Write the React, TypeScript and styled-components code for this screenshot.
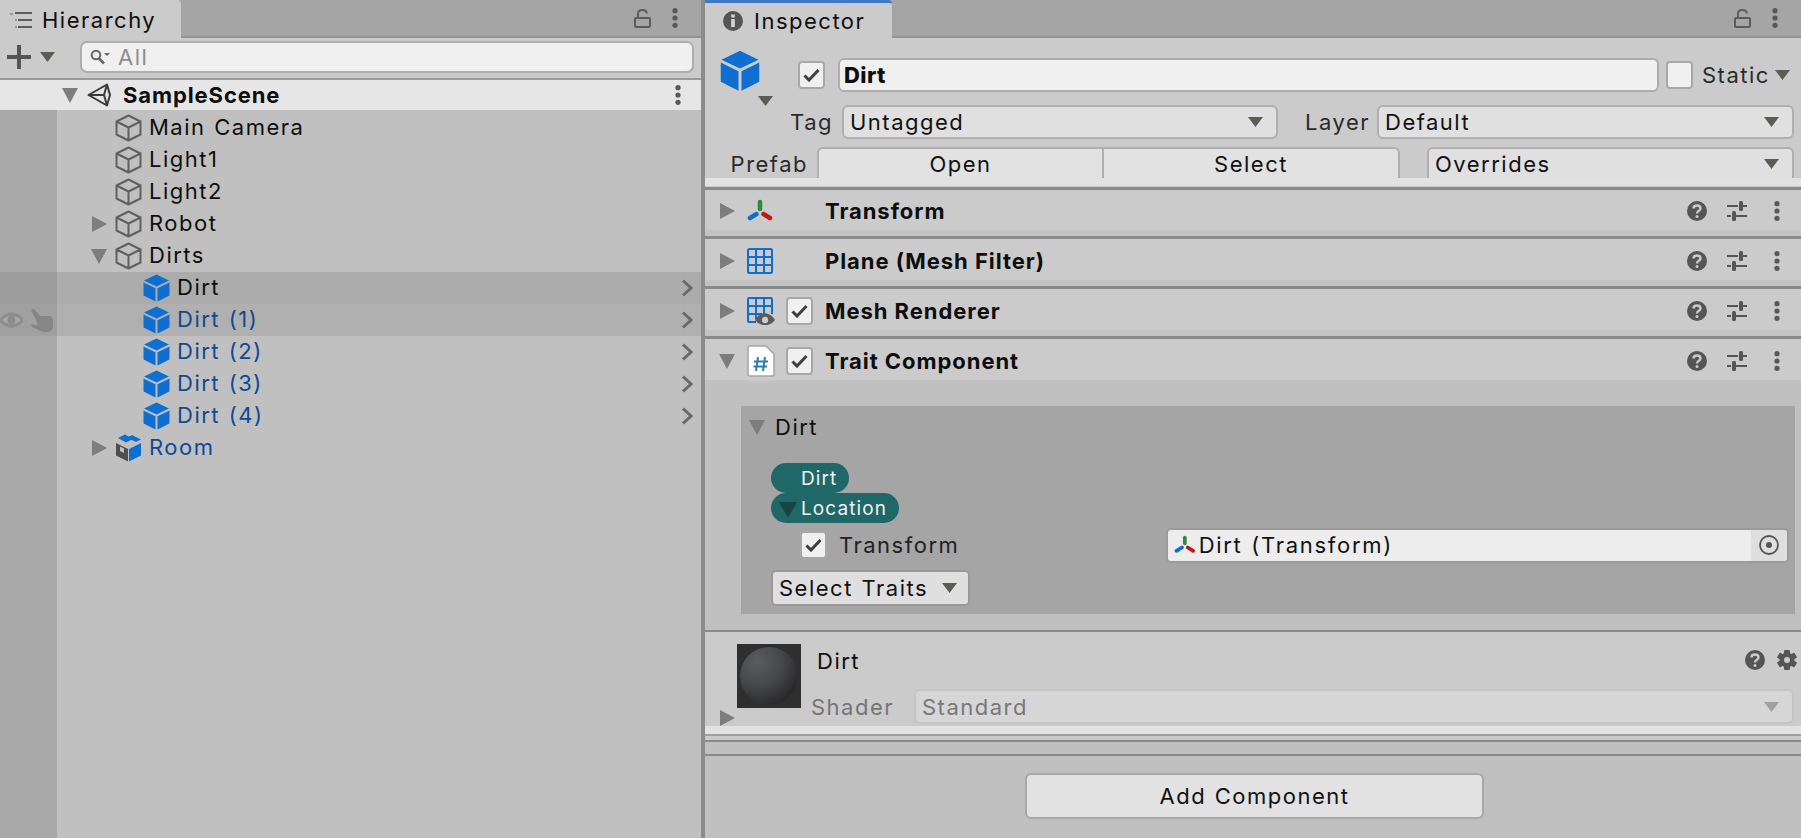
import React from "react";
import styled, { createGlobalStyle } from "styled-components";

const Global = createGlobalStyle`
  html, body { margin: 0; padding: 0; height: 100%; overflow: hidden; background: #c0c0c0; }
  #root { height: 100%; }
  * { box-sizing: border-box; }
`;

const Page = styled.div`
  display: flex; width: 1801px; height: 838px; overflow: hidden;
  font-family: Inter, "Noto Sans", sans-serif; font-size: 22px; color: #0e0e0e;
  letter-spacing: 1.5px; word-spacing: 1px; white-space: nowrap;
`;
const LeftPanel = styled.div`
  width: 705px; flex: none; border-right: 4px solid #8c8c8c; display: flex; flex-direction: column;
`;
const RightPanel = styled.div`
  flex: 1; display: flex; flex-direction: column; min-width: 0;
`;
const TabBar = styled.div`
  height: 38px; flex: none; background: #a5a5a5; border-bottom: 2px solid #949494;
  display: flex; align-items: flex-start; padding-right: 23px;
`;
const Tab = styled.div<{ $w: number; $active?: boolean }>`
  width: ${p => p.$w}px; height: 38px; background: #cbcbcb;
  display: flex; align-items: center; gap: ${p => (p.$active ? 11 : 10)}px; padding-left: ${p => (p.$active ? 18 : 10)}px;
  border-radius: 0 4px 0 0;
  border-top: ${p => (p.$active ? "3px solid #3f78c4" : "0")};
  padding-top: ${p => (p.$active ? 0 : 2)}px;
`;
const Spacer = styled.div` flex: 1; `;
const TabTools = styled.div`
  display: flex; align-items: center; gap: 21px; height: 36px;
`;
const Toolbar = styled.div`
  height: 42px; flex: none; background: #cbcbcb; border-bottom: 2px solid #9a9a9a;
  display: flex; align-items: center; padding: 0 7px 2px 7px; gap: 9px;
`;
const SearchBox = styled.div`
  margin-left: 16px; flex: 1; height: 32px; background: #f0f0f0; border: 2px solid #adadad;
  border-radius: 7px; display: flex; align-items: center; padding-left: 8px; gap: 8px; color: #8d8d8d;
`;
const Tree = styled.div` flex: 1; background: #c0c0c0; display: flex; flex-direction: column; `;
const SceneRow = styled.div`
  height: 30px; background: #e6e6e6; display: flex; align-items: center; padding: 0 20px 0 62px; font-weight: 700; flex: none;
`;
const SceneGap = styled.span` width: 9px; flex: none; `;
const SceneTitle = styled.span` margin-left: 12px; flex: 1; letter-spacing: 0.9px; `;
const GutterRows = styled.div`
  display: flex; flex-direction: column; flex: 1; padding-top: 2px;
  background: linear-gradient(90deg, #a9a9a9 57px, #c0c0c0 57px);
`;
const Row = styled.div<{ $bg?: "a" | "b" }>`
  height: 32px; flex: none; display: flex; align-items: center;
  background: ${p => (p.$bg === "a" ? "#acacac" : p.$bg === "b" ? "#b0b0b0" : "transparent")};
  padding-right: 8px;
`;
const RowGutter = styled.div<{ $tint?: boolean }>`
  width: 57px; height: 100%; flex: none; display: flex; align-items: center; justify-content: space-between; padding-right: 4px;
  background: ${p => (p.$tint ? "rgba(0,0,0,0.085)" : "transparent")};
`;
const FoldSlot = styled.div<{ $w: number }>`
  width: ${p => p.$w}px; flex: none; display: flex; justify-content: flex-end; padding-right: 8px;
`;
const RowLabel = styled.span<{ $blue?: boolean }>`
  margin-left: 7px; padding-bottom: 2px; flex: 1; color: ${p => (p.$blue ? "#0c4a96" : "#0e0e0e")};
`;
const InspectorHead = styled.div`
  height: 149px; flex: none; background: #cbcbcb; display: flex; flex-direction: column; padding: 0 7px 0 0;
`;
const HeadRow = styled.div<{ $h: number; $top: number }>`
  height: ${p => p.$h}px; margin-top: ${p => p.$top}px; display: flex; align-items: center; flex: none;
`;
const BigCube = styled.div`
  width: 93px; flex: none; height: 50px; padding-left: 15px; position: relative; display: flex;
`;
const CheckBox = styled.div`
  width: 27px; height: 28px; flex: none; background: #f0f0f0; border: 2px solid #a8a8a8; border-radius: 4px;
  display: flex; align-items: center; justify-content: center;
`;
const NameInput = styled.div`
  flex: none; width: 821px; margin: 0 7px 0 13px; height: 34px; background: #f0f0f0; border: 2px solid #adadad; border-radius: 6px;
  font-weight: 800; display: flex; align-items: center; padding-left: 4px; letter-spacing: 0.4px;
`;
const StaticLabel = styled.span` margin-left: 9px; color: #2a2a2a; flex: 1; `;
const CaretEnd = styled.span` margin-right: 4px; display: flex; `;
const FieldLabel = styled.span<{ $w: number; $dim?: boolean; $left?: boolean; $drop?: number }>`
  width: ${p => p.$w}px; flex: none; text-align: ${p => (p.$left ? "left" : "right")}; color: ${p => (p.$dim ? "#757575" : "#2a2a2a")};
  padding-top: ${p => p.$drop ?? 0}px;
`;
const Dropdown = styled.div<{ $w: number; $left?: number; $dim?: boolean; $flat?: boolean }>`
  width: ${p => p.$w}px; margin-left: ${p => p.$left ?? 0}px; flex: none; height: 100%;
  background: ${p => (p.$dim ? "#d6d6d6" : "#e0e0e0")};
  border: 2px solid ${p => (p.$dim ? "#c4c4c4" : "#afafaf")};
  ${p => (p.$flat ? "border-bottom: 0; border-radius: 6px 6px 0 0;" : "border-radius: 6px;")}
  color: ${p => (p.$dim ? "#787878" : "#111")};
  display: flex; align-items: center; justify-content: space-between; padding: 0 13px 0 6px;
`;
const PrefabButton = styled.div<{ $w: number; $first?: boolean }>`
  width: ${p => p.$w}px; flex: none; height: 100%; background: #e2e2e2; display: flex; align-items: center; justify-content: center;
  border: 2px solid #afafaf; border-bottom: 0;
  ${p => (p.$first ? "border-right: 0; border-radius: 6px 0 0 0; margin-left: 9px;" : "border-radius: 0 6px 0 0;")}
  color: #111;
`;
const HeadStrip = styled.div` height: 8px; flex: none; background: #e2e2e2; margin-right: -7px; `;
const Comp = styled.div<{ $h: number; $open?: boolean }>`
  height: ${p => p.$h}px; flex: none;
  background: linear-gradient(#cbcbcb calc(100% - ${p => (p.$open ? 3 : 6)}px), #c3c3c3 calc(100% - ${p => (p.$open ? 3 : 6)}px));
  border-top: 3px solid #8a8a8a; display: flex; align-items: center; padding: 0 21px ${p => (p.$open ? 1 : 4)}px 14px;
`;
const CompIconSlot = styled.div` width: 39px; margin-left: 12px; flex: none; display: flex; `;
const CheckSlot = styled.div` width: 39px; flex: none; display: flex; `;
const CompTitle = styled.span` font-weight: 700; flex: 1; letter-spacing: 0.95px; word-spacing: 0; `;
const CompTools = styled.div` display: flex; align-items: center; gap: 20px; flex: none; `;
const KebabSlot = styled.span` margin-left: 7px; display: flex; `;
const Body = styled.div` background: #c0c0c0; height: 247px; padding: 23px 6px 0 36px; flex: none; `;
const TraitBox = styled.div`
  background: #a5a5a5; height: 208px; display: flex; flex-direction: column; padding: 0 6px 0 8px;
`;
const TraitHead = styled.div` height: 41px; display: flex; align-items: center; gap: 10px; flex: none; `;
const Pill = styled.div<{ $w: number; $top?: number }>`
  width: ${p => p.$w}px; height: 30px; margin-top: ${p => p.$top ?? 0}px; background: #206768; border-radius: 15px; color: #f2f2f2; font-size: 19px; flex: none;
  display: flex; align-items: center; padding-left: 30px; margin-left: 22px; position: relative; letter-spacing: 1.1px;
`;
const PillCaret = styled.span`
  position: absolute; left: 8px; top: 9px; width: 0; height: 0;
  border-left: 9px solid transparent; border-right: 9px solid transparent; border-top: 16px solid #174545;
`;
const TraitField = styled.div` display: flex; align-items: center; height: 34px; margin-top: 5px; flex: none; padding-left: 51px; `;
const TraitLabel = styled.span` margin-left: 12px; width: 327px; color: #222; flex: none; `;
const ObjectField = styled.div`
  flex: 1; height: 35px; background: #ededed; border: 2px solid #9a9a9a; border-radius: 5px; display: flex; align-items: center;
  padding-left: 6px; gap: 3px; color: #111;
`;
const FieldName = styled.span` flex: 1; letter-spacing: 1.7px; `;
const TargetSlot = styled.div`
  width: 36px; height: 100%; background: #dfdfdf; display: flex; align-items: center; justify-content: center; border-radius: 0 4px 4px 0;
`;
const SelectButton = styled.div`
  width: 199px; height: 36px; margin: 8px 0 0 22px; flex: none; background: #dfdfdf; border: 2px solid #989898; border-radius: 5px;
  display: flex; align-items: center; justify-content: space-between; padding: 0 11px 0 6px; color: #111;
`;
const MaterialSection = styled.div`
  height: 96px; flex: none; background: #cbcbcb; border-top: 2px solid #8a8a8a; position: relative;
  display: flex; padding: 12px 7px 0 32px;
`;
const Thumb = styled.div`
  width: 64px; height: 64px; background: #2f2f2f; flex: none; display: flex; align-items: center; justify-content: center;
`;
const Sphere = styled.div`
  width: 58px; height: 58px; border-radius: 50%;
  background: radial-gradient(circle at 30% 25%, #5b5c60 0%, #47484c 40%, #2b2b2d 75%, #161617 100%);
`;
const MaterialInfo = styled.div` flex: 1; margin-left: 10px; display: flex; flex-direction: column; min-width: 0; `;
const MatTop = styled.div` height: 32px; display: flex; align-items: center; padding-left: 6px; flex: none; `;
const MatName = styled.span` flex: 1; padding-top: 2px; `;
const MatTools = styled.div` display: flex; align-items: center; gap: 12px; margin-right: -3px; `;
const MatBottom = styled.div` height: 35px; margin-top: 13px; display: flex; align-items: center; flex: none; `;
const MatFold = styled.div` position: absolute; left: 14px; bottom: 0; display: flex; `;
const IconCaret = styled.div` position: absolute; left: 53px; bottom: -6px; display: flex; `;
const Line = styled.div<{ $h: number; $c: string }>` height: ${p => p.$h}px; background: ${p => p.$c}; flex: none; `;
const Footer = styled.div` flex: 1; background: #c0c0c0; display: flex; justify-content: center; align-items: flex-start; padding: 17px 0 0 0; `;
const AddButton = styled.div`
  width: 459px; height: 46px; background: #e2e2e2; border: 2px solid #a8a8a8; border-radius: 6px; display: flex; align-items: center; justify-content: center; color: #111;
  margin-left: 3px;
`;

const iconStyle: React.CSSProperties = { display: "block", flex: "none" };

const Tri = ({ dir, size = 16, c = "#7d7d7d" }: { dir: "r" | "d"; size?: number; c?: string }) => (
  <svg width={size} height={size} viewBox="0 0 16 16" style={iconStyle}>
    <polygon points={dir === "r" ? "1,0 16,8 1,16" : "0,1 16,1 8,16"} fill={c} />
  </svg>
);
const Caret = ({ c = "#5c5c54", w = 15 }: { c?: string; w?: number }) => (
  <svg width={w} height={10} viewBox="0 0 15 10" style={iconStyle}>
    <polygon points="0,0 15,0 7.5,10" fill={c} />
  </svg>
);
const OutlineCube = () => (
  <svg width={27} height={28} viewBox="0 0 27 28" style={iconStyle} fill="none" stroke="#5f5f5f" strokeWidth="2" strokeLinejoin="round">
    <path d="M13.5 1.5L25.5 7.5V20.5L13.5 26.5L1.5 20.5V7.5Z M1.5 7.5L13.5 13.5L25.5 7.5 M13.5 13.5V26.5" />
  </svg>
);
const BlueCube = ({ s = 27 }: { s?: number }) => (
  <svg width={s} height={s * 28 / 27} viewBox="0 0 27 28" style={iconStyle} fill="#0f6fd1">
    <path d="M13.5 0.5L26 6.5L13.5 12.5L1 6.5Z" />
    <path d="M0.5 8.5L12.5 14.3V27.5L0.5 21.5Z" />
    <path d="M26.5 8.5L14.5 14.3V27.5L26.5 21.5Z" />
  </svg>
);
const PrefabBox = () => (
  <svg width={27} height={28} viewBox="0 0 27 28" style={iconStyle}>
    <path d="M1 9L13 15V27.5L1 21.5Z" fill="#4e4e4e" />
    <path d="M14 15L26 9V21.5L14 27.5Z" fill="#0f6fd1" />
    <path d="M3 4L10 0.5L18 5L11 8.5Z" fill="#0f6fd1" />
    <path d="M17 1L26 5.5L21 8L12 3.5Z" fill="#0f6fd1" />
    <path d="M5 12.5L9 14.5V19L5 17Z" fill="#c0c0c0" />
  </svg>
);
const UnityLogo = () => (
  <svg width={24} height={24} viewBox="0 0 24 24" style={iconStyle} fill="none" stroke="#3a3a3a" strokeWidth="2" strokeLinejoin="round">
    <path d="M1.5 12L20 1.5L23 12L20 22.5Z M1.5 12H17 M17 12L20 1.5 M17 12L20 22.5" />
  </svg>
);
const Lock = () => (
  <svg width={17} height={20} viewBox="0 0 17 20" style={iconStyle} fill="none" stroke="#5c5c5c" strokeWidth="2">
    <rect x="1" y="10" width="15" height="9" rx="1" />
    <path d="M4 10V5.5C4 1 12 0.5 13 5.5" />
  </svg>
);
const Kebab = ({ c = "#585858" }: { c?: string }) => (
  <svg width={6} height={20} viewBox="0 0 6 20" style={iconStyle} fill={c}>
    <circle cx="3" cy="2.7" r="2.6" /><circle cx="3" cy="10" r="2.6" /><circle cx="3" cy="17.3" r="2.6" />
  </svg>
);
const Check = () => (
  <svg width={17} height={14} viewBox="0 0 17 14" style={iconStyle} fill="none" stroke="#3f3f3f" strokeWidth="3">
    <path d="M1.5 7.5L6 12L15.5 2" />
  </svg>
);
const Help = () => (
  <svg width={20} height={20} viewBox="0 0 20 20" style={iconStyle}>
    <circle cx="10" cy="10" r="10" fill="#555" />
    <path d="M6.5 7.5C6.5 3.5 13.5 3.5 13.5 7.5C13.5 10 10 9.5 10 12.5" fill="none" stroke="#cbcbcb" strokeWidth="2.4" />
    <circle cx="10" cy="15.5" r="1.5" fill="#cbcbcb" />
  </svg>
);
const Sliders = () => (
  <svg width={20} height={20} viewBox="0 0 20 20" style={iconStyle} fill="#555">
    <rect x="0" y="4" width="11" height="2" /><rect x="13" y="4" width="7" height="2" />
    <rect x="12" y="0" width="4" height="10" rx="1.5" />
    <rect x="0" y="14" width="4" height="2" /><rect x="8" y="14" width="12" height="2" />
    <rect x="5" y="10" width="4" height="10" rx="1.5" />
  </svg>
);
const AxisIcon = ({ s = 24 }: { s?: number }) => (
  <svg width={s * 26 / 24} height={s} viewBox="0 0 26 24" style={iconStyle} strokeWidth="4.5" strokeLinecap="round" fill="none">
    <path d="M13 3V10" stroke="#2e8b3a" />
    <path d="M9.5 15L3 19" stroke="#0f6fd1" />
    <path d="M16.5 15L23 19" stroke="#c01818" />
  </svg>
);
const GridIcon = () => (
  <svg width={26} height={26} viewBox="0 0 26 26" style={iconStyle} fill="none" stroke="#0f6fd1" strokeWidth="2">
    <rect x="1" y="1" width="24" height="24" rx="1.5" />
    <path d="M9 1V25M17 1V25M1 9H25M1 17H25" />
  </svg>
);
const GridEye = () => (
  <svg width={28} height={28} viewBox="0 0 28 28" style={iconStyle}>
    <g fill="none" stroke="#0f6fd1" strokeWidth="2">
      <path d="M9 25H2a1 1 0 0 1-1-1V2a1 1 0 0 1 1-1H24a1 1 0 0 1 1 1V17" />
      <path d="M9 1V22M17 1V17M1 9H25M1 17H15" />
    </g>
    <path d="M8 23C13 14 23 14 28 23C23 30 13 30 8 23Z" fill="#5a5a5a" />
    <circle cx="18" cy="23" r="3.2" fill="#cbcbcb" />
  </svg>
);
const ScriptIcon = () => (
  <svg width={28} height={32} viewBox="0 0 28 32" style={iconStyle}>
    <path d="M3 1H19L27 9V29a2 2 0 0 1-2 2H3a2 2 0 0 1-2-2V3a2 2 0 0 1 2-2Z" fill="#fff" stroke="#a5a5a5" strokeWidth="1.5" />
    <path d="M11 12L9 26M18 12L16 26M7 16.5H21M6.5 21.5H20" stroke="#2d7fb0" strokeWidth="2" fill="none" />
  </svg>
);
const SearchIcon = () => (
  <svg width={20} height={16} viewBox="0 0 20 16" style={iconStyle}>
    <circle cx="6" cy="6" r="4.3" fill="none" stroke="#666" strokeWidth="2" />
    <path d="M9 9.5L14 14.5" stroke="#666" strokeWidth="2.5" />
    <polygon points="14,4 20,4 17,7" fill="#666" />
  </svg>
);
const Plus = () => (
  <svg width={24} height={24} viewBox="0 0 24 24" style={iconStyle} fill="#555">
    <rect x="0" y="10" width="24" height="4" /><rect x="10" y="0" width="4" height="24" />
  </svg>
);
const ListIcon = () => (
  <svg width={22} height={18} viewBox="0 0 22 18" style={iconStyle} fill="#5c5c5c">
    <rect x="0" y="2" width="3" height="2" fill="#999" /><rect x="5" y="1" width="17" height="2" />
    <rect x="5" y="8" width="2" height="2" fill="#999" /><rect x="8" y="8" width="14" height="2" />
    <rect x="5" y="15" width="2" height="2" fill="#999" /><rect x="8" y="15" width="14" height="2" />
  </svg>
);
const InfoIcon = () => (
  <svg width={20} height={20} viewBox="0 0 20 20" style={iconStyle}>
    <circle cx="10" cy="10" r="10" fill="#555" />
    <rect x="8.2" y="8" width="3.6" height="8" fill="#d5d5d5" />
    <rect x="8.2" y="3.5" width="3.6" height="3" fill="#d5d5d5" />
  </svg>
);
const Chevron = () => (
  <svg width={12} height={18} viewBox="0 0 12 18" style={iconStyle} fill="none" stroke="#6a6a6a" strokeWidth="3">
    <path d="M2 1.5L10 9L2 16.5" />
  </svg>
);
const Eye = () => (
  <svg width={23} height={16} viewBox="0 0 23 16" style={iconStyle}>
    <path d="M-1 8C5 -2 18 -2 24 8C18 18 5 18 -1 8Z" fill="#8c8c8c" />
    <path d="M2 8C7 2.5 16 2.5 21 8C16 13.5 7 13.5 2 8Z" fill="#a8a8a8" />
    <circle cx="11.5" cy="8" r="4" fill="#8c8c8c" />
  </svg>
);
const Hand = () => (
  <svg width={23} height={23} viewBox="0 0 23 23" style={iconStyle} fill="#868686">
    <path d="M1 1L4 0L10 7L19 7C21 7 23 9 23 11V17C23 20 21 23 18 23H13L2 18L1 15L8 16L5 9Z" />
  </svg>
);
const Target = () => (
  <svg width={20} height={20} viewBox="0 0 20 20" style={iconStyle}>
    <circle cx="10" cy="10" r="9" fill="none" stroke="#555" strokeWidth="1.8" />
    <circle cx="10" cy="10" r="3" fill="#555" />
  </svg>
);
const Gear = () => (
  <svg width={20} height={20} viewBox="0 0 20 20" style={iconStyle}>
    <g fill="#555">
      {[0, 60, 120].map(a => <rect key={a} x="7" y="0" width="6" height="20" rx="1" transform={`rotate(${a} 10 10)`} />)}
      <circle cx="10" cy="10" r="7.5" />
    </g>
    <circle cx="10" cy="10" r="3" fill="#cbcbcb" />
  </svg>
);

type Item = { name: string; depth: 0 | 1; icon: "outline" | "blue" | "prefab"; fold?: "r" | "d"; blue?: boolean; chevron?: boolean; bg?: "a" | "b"; tools?: boolean };
const items: Item[] = [
  { name: "Main Camera", depth: 0, icon: "outline" },
  { name: "Light1", depth: 0, icon: "outline" },
  { name: "Light2", depth: 0, icon: "outline" },
  { name: "Robot", depth: 0, icon: "outline", fold: "r" },
  { name: "Dirts", depth: 0, icon: "outline", fold: "d" },
  { name: "Dirt", depth: 1, icon: "blue", chevron: true, bg: "a" },
  { name: "Dirt (1)", depth: 1, icon: "blue", blue: true, chevron: true, bg: "b", tools: true },
  { name: "Dirt (2)", depth: 1, icon: "blue", blue: true, chevron: true },
  { name: "Dirt (3)", depth: 1, icon: "blue", blue: true, chevron: true },
  { name: "Dirt (4)", depth: 1, icon: "blue", blue: true, chevron: true },
  { name: "Room", depth: 0, icon: "prefab", fold: "r", blue: true },
];

const comps = [
  { title: "Transform", icon: <AxisIcon />, check: false, h: 49 },
  { title: "Plane (Mesh Filter)", icon: <GridIcon />, check: false, h: 50 },
  { title: "Mesh Renderer", icon: <GridEye />, check: true, h: 50 },
  { title: "Trait Component", icon: <ScriptIcon />, check: true, h: 47, open: true },
];

export default function App() {
  return (
    <Page>
      <Global />
      <LeftPanel>
        <TabBar>
          <Tab $w={181}><ListIcon />Hierarchy</Tab>
          <Spacer />
          <TabTools><Lock /><Kebab /></TabTools>
        </TabBar>
        <Toolbar>
          <Plus />
          <Caret />
          <SearchBox><SearchIcon />All</SearchBox>
        </Toolbar>
        <Tree>
          <SceneRow><Tri dir="d" /><SceneGap /><UnityLogo /><SceneTitle>SampleScene</SceneTitle><Kebab /></SceneRow>
          <GutterRows>
            {items.map(it => (
              <Row key={it.name} $bg={it.bg}>
                <RowGutter $tint={!!it.bg}>{it.tools && <><Eye /><Hand /></>}</RowGutter>
                <FoldSlot $w={it.depth ? 86 : 58}>{it.fold && <Tri dir={it.fold} />}</FoldSlot>
                {it.icon === "outline" ? <OutlineCube /> : it.icon === "blue" ? <BlueCube /> : <PrefabBox />}
                <RowLabel $blue={it.blue}>{it.name}</RowLabel>
                {it.chevron && <Chevron />}
              </Row>
            ))}
          </GutterRows>
        </Tree>
      </LeftPanel>
      <RightPanel>
        <TabBar>
          <Tab $w={187} $active><InfoIcon />Inspector</Tab>
          <Spacer />
          <TabTools><Lock /><Kebab /></TabTools>
        </TabBar>
        <InspectorHead>
          <HeadRow $h={34} $top={20}>
            <BigCube><BlueCube s={40} /><IconCaret><Caret /></IconCaret></BigCube>
            <CheckBox><Check /></CheckBox>
            <NameInput>Dirt</NameInput>
            <CheckBox />
            <StaticLabel>Static</StaticLabel>
            <CaretEnd><Caret /></CaretEnd>
          </HeadRow>
          <HeadRow $h={34} $top={13}>
            <FieldLabel $w={128}>Tag</FieldLabel>
            <Dropdown $w={436} $left={9}>Untagged<Caret /></Dropdown>
            <FieldLabel $w={92}>Layer</FieldLabel>
            <Dropdown $w={417} $left={7}>Default<Caret /></Dropdown>
          </HeadRow>
          <HeadRow $h={31} $top={8}>
            <FieldLabel $w={103} $drop={2}>Prefab</FieldLabel>
            <PrefabButton $w={285} $first>Open</PrefabButton>
            <PrefabButton $w={298}>Select</PrefabButton>
            <Dropdown $w={367} $left={27} $flat>Overrides<Caret /></Dropdown>
          </HeadRow>
          <HeadStrip />
        </InspectorHead>
        {comps.map(c => (
          <Comp key={c.title} $h={c.h} $open={c.open}>
            <Tri dir={c.open ? "d" : "r"} />
            <CompIconSlot>{c.icon}</CompIconSlot>
            <CheckSlot>{c.check && <CheckBox><Check /></CheckBox>}</CheckSlot>
            <CompTitle>{c.title}</CompTitle>
            <CompTools><Help /><Sliders /><KebabSlot><Kebab /></KebabSlot></CompTools>
          </Comp>
        ))}
        <Body>
          <TraitBox>
            <TraitHead><Tri dir="d" />Dirt</TraitHead>
            <Pill $w={78} $top={16}>Dirt</Pill>
            <Pill $w={128}><PillCaret />Location</Pill>
            <TraitField>
              <CheckBox><Check /></CheckBox>
              <TraitLabel>Transform</TraitLabel>
              <ObjectField>
                <AxisIcon s={20} /><FieldName>Dirt (Transform)</FieldName>
                <TargetSlot><Target /></TargetSlot>
              </ObjectField>
            </TraitField>
            <SelectButton>Select Traits<Caret /></SelectButton>
          </TraitBox>
        </Body>
        <MaterialSection>
          <Thumb><Sphere /></Thumb>
          <MaterialInfo>
            <MatTop><MatName>Dirt</MatName><MatTools><Help /><Gear /></MatTools></MatTop>
            <MatBottom>
              <FieldLabel $w={103} $dim $left>Shader</FieldLabel>
              <Dropdown $w={880} $dim>Standard<Caret c="#a0a0a0" /></Dropdown>
            </MatBottom>
          </MaterialInfo>
          <MatFold><Tri dir="r" /></MatFold>
        </MaterialSection>
        <Line $h={8} $c="#e2e2e2" />
        <Line $h={2} $c="#a0a0a0" />
        <Line $h={4} $c="#cbcbcb" />
        <Line $h={2} $c="#8a8a8a" />
        <Line $h={12} $c="#c0c0c0" />
        <Line $h={2} $c="#8a8a8a" />
        <Footer><AddButton>Add Component</AddButton></Footer>
      </RightPanel>
    </Page>
  );
}
